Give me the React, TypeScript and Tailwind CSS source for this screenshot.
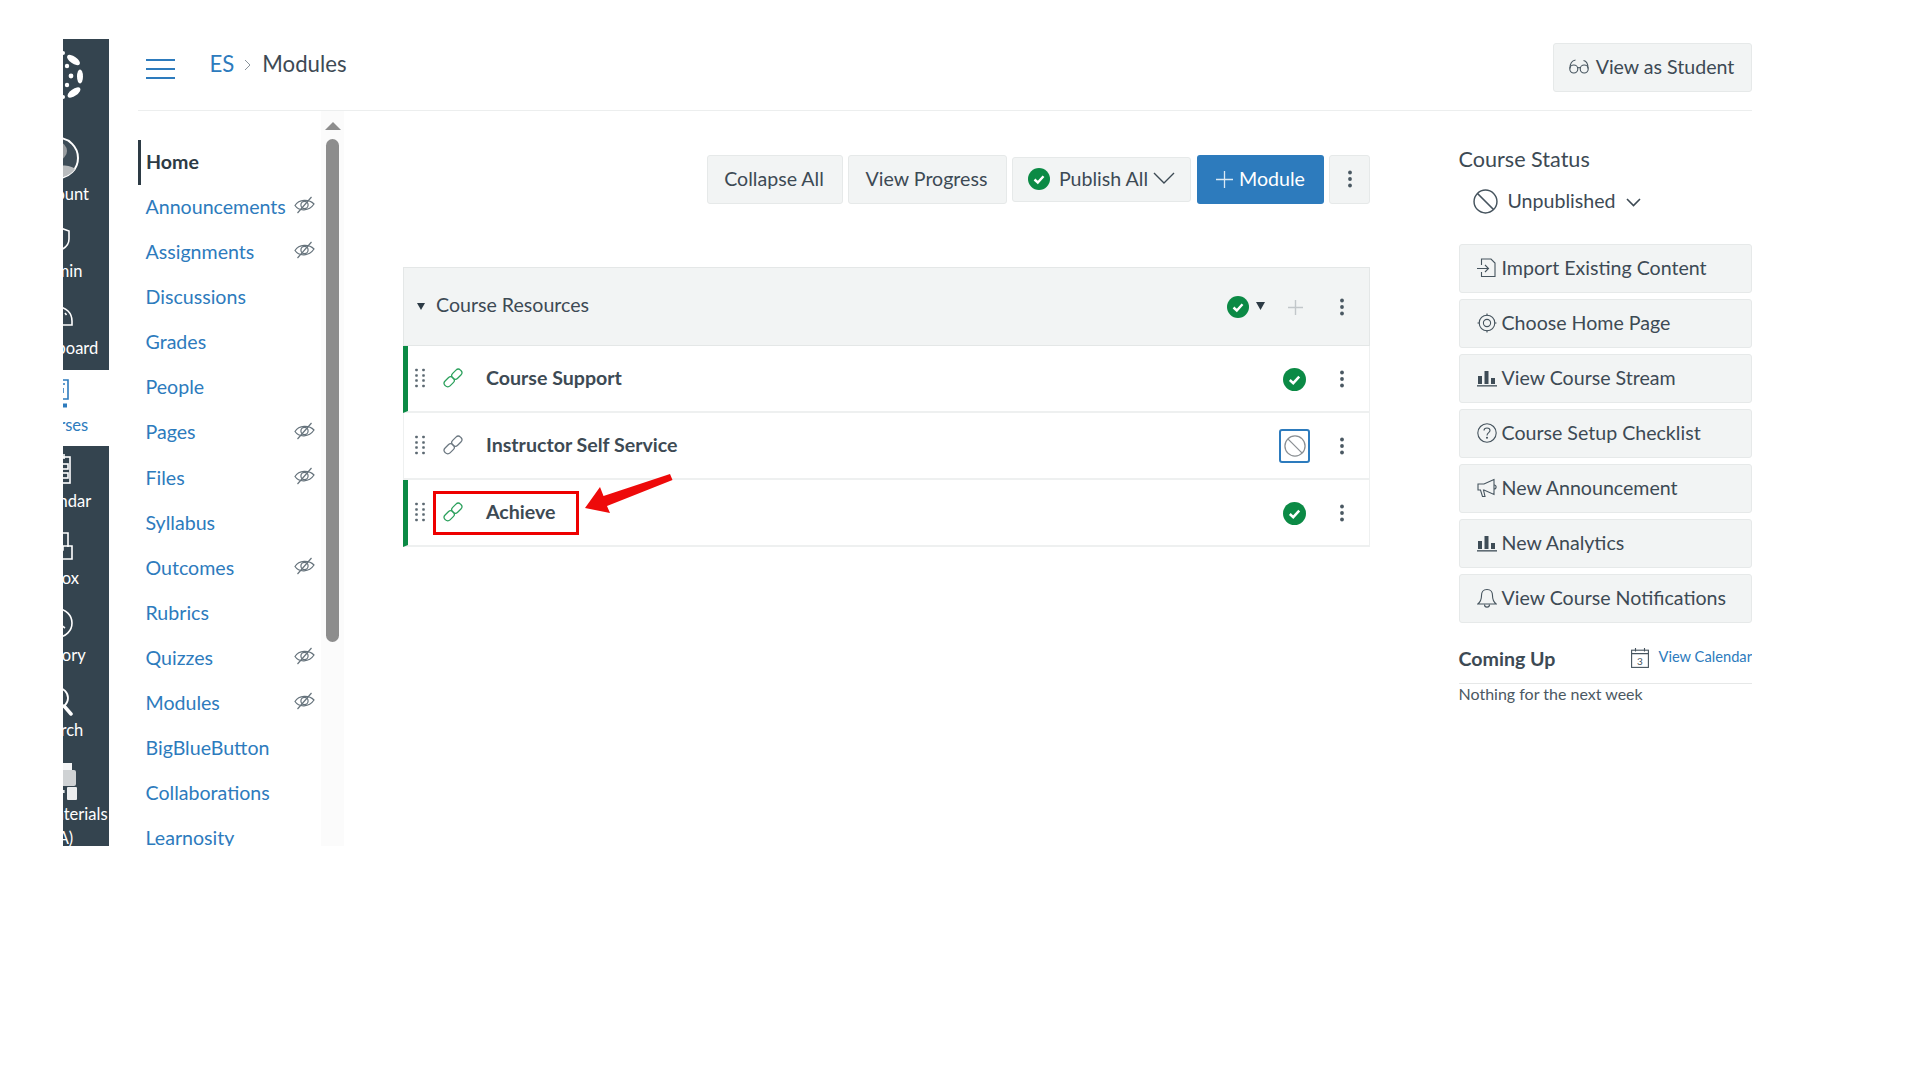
import React from "react";

const Eye = () => (
  <svg width="21" height="18" viewBox="0 0 21 18" fill="none" stroke="#66737c" strokeWidth="1.2" className="mt-[-3px] shrink-0">
    <path d="M1 9.5C5 3 15 3 20 8C15 15.5 5 15.5 1 9.5Z" />
    <circle cx="10.5" cy="9" r="3.6" />
    <path d="M3.5 17L17.5 1" />
  </svg>
);

const Dots = () => (
  <svg width="10" height="20" viewBox="0 0 10 20" fill="#5c6972" className="mt-[2px]">
    {[1.5, 8.5].map((x) => [2, 7.5, 12.5, 18].map((y) => <rect key={`${x}-${y}`} x={x - 1.3} y={y - 1.3} width="2.6" height="2.6" rx="0.8" />))}
  </svg>
);

const Chain = ({ c }: { c: string }) => (
  <svg width="20" height="20" viewBox="0 0 20 20" fill="none" stroke={c} strokeWidth="1.25" className="mt-[2px]">
    <rect x="0.7" y="10.3" width="11" height="7" rx="3.2" transform="rotate(-45 6.2 13.8)" />
    <rect x="8.3" y="2.7" width="11" height="7" rx="3.2" transform="rotate(-45 13.8 6.2)" />
  </svg>
);

const Check = ({ s = 22 }: { s?: number }) => (
  <svg width={s} height={s} viewBox="0 0 22 22" className="shrink-0">
    <circle cx="11" cy="11" r="11" fill="#0b8a45" />
    <path d="M6.5 11.5L9.8 14.5L15.5 8.3" fill="none" stroke="#fff" strokeWidth="2.4" />
  </svg>
);

const Kebab = () => (
  <svg width="6" height="18" viewBox="0 0 6 18" fill="#4a5862" className="shrink-0">
    <circle cx="3" cy="2.5" r="1.9" />
    <circle cx="3" cy="9" r="1.9" />
    <circle cx="3" cy="15.5" r="1.9" />
  </svg>
);

const Ban = ({ s, c }: { s: number; c: string }) => (
  <svg width={s} height={s} viewBox="0 0 24 24" fill="none" stroke={c} strokeWidth="1.4">
    <circle cx="12" cy="12" r="11" />
    <path d="M4.2 4.2L19.8 19.8" />
  </svg>
);

const Bars = () => (
  <svg width="20" height="18" viewBox="0 0 20 18" fill="#3e4c56">
    <rect x="1" y="7" width="4" height="8" />
    <rect x="7.5" y="2" width="4" height="13" />
    <rect x="14" y="9" width="4" height="6" />
    <rect x="0" y="16.2" width="20" height="1.3" />
  </svg>
);

const I = { fill: "none", stroke: "#46545e", strokeWidth: 1.1 };

const Import = () => (
  <svg width="20" height="20" viewBox="0 0 20 20" {...I}>
    <path d="M4.5 7V1H14L18 5V18.5H4.5V14" />
    <path d="M0 10.5H11M8 7L11.5 10.5L8 14" />
  </svg>
);
const Target = () => (
  <svg width="20" height="20" viewBox="0 0 20 20" {...I}>
    <circle cx="10" cy="10" r="7.8" />
    <circle cx="10" cy="10" r="3.6" />
    <path d="M10 0.5V3M10 17V19.5M0.5 10H3M17 10H19.5" />
  </svg>
);
const Help = () => (
  <svg width="20" height="20" viewBox="0 0 20 20" {...I}>
    <circle cx="10" cy="10" r="9.2" />
    <path d="M7 7.6C7 5.8 8.4 5 10 5C11.7 5 13 6 13 7.6C13 9.7 10 9.6 10 12.4" />
    <circle cx="10" cy="14.8" r="0.5" />
  </svg>
);
const Mega = () => (
  <svg width="20" height="20" viewBox="0 0 20 20" {...I}>
    <path d="M17 1.5L7 6H1V12H3.5L5.5 18.5H8L6.5 12H7L17 16.5Z" />
    <path d="M17 7C19.8 7 19.8 11 17 11" />
  </svg>
);
const Bell = () => (
  <svg width="20" height="20" viewBox="0 0 20 20" {...I}>
    <path d="M10 1.5C6 1.5 4.5 4.5 4.5 7.5C4.5 11.5 3.5 14 0.8 16H19.2C16.5 14 15.5 11.5 15.5 7.5C15.5 4.5 14 1.5 10 1.5Z" />
    <path d="M7.5 16.5C7.5 20 12.5 20 12.5 16.5" />
  </svg>
);
const Glasses = () => (
  <svg width="20" height="16" viewBox="0 0 20 16" {...I}>
    <circle cx="4.8" cy="10" r="4" />
    <circle cx="15.2" cy="10" r="4" />
    <path d="M8.6 9C9.4 8.4 10.6 8.4 11.4 9M0.9 9.5C1 5 3 1.5 6.5 1M19.1 9.5C19 5 17.5 2 14.5 1.5" />
  </svg>
);

const Cal = () => (
  <svg width="18" height="20" viewBox="0 0 18 20" fill="none" stroke="#46545e" strokeWidth="1.1">
    <rect x="0.6" y="2.2" width="16.8" height="17.2" />
    <path d="M0.6 5.6H17.4M4.5 0V3.5M13.5 0V3.5" />
    <text x="9" y="16.5" textAnchor="middle" fontSize="10" fill="#46545e" stroke="none" fontFamily="Lato">3</text>
  </svg>
);

const navIcons: Record<string, React.ReactNode> = {
  Account: (
    <svg width="42" height="42" viewBox="0 0 42 42">
      <circle cx="21" cy="21" r="20" fill="#3d4c57" stroke="#fff" strokeWidth="2" />
      <circle cx="21" cy="14" r="9" fill="#999da0" />
      <path d="M8 39C8 27 32 26 38 32C32 41 18 43 8 39Z" fill="#b9bcbe" />
    </svg>
  ),
  Admin: (
    <svg width="24" height="26" viewBox="0 0 24 26" fill="none" stroke="#fff" strokeWidth="1.6">
      <path d="M12 1L23 5V13C23 19 18 23 12 25C6 23 1 19 1 13V5Z" />
      <circle cx="12" cy="15" r="3" fill="#fff" />
    </svg>
  ),
  Dashboard: (
    <svg width="30" height="20" viewBox="0 0 30 20" fill="none" stroke="#fff" strokeWidth="1.6">
      <path d="M1 19V15C1 7 7 1 15 1C23 1 29 7 29 15V19Z" />
      <path d="M22 7L23.5 9" />
    </svg>
  ),
  Courses: (
    <svg width="22" height="29" viewBox="0 0 22 29" fill="none" stroke="#2d7bbd" strokeWidth="1.6">
      <path d="M1 1H21V20H1Z" />
      <path d="M15 5H18M16 9V14" />
      <path d="M1 26.5H20" strokeWidth="4" />
    </svg>
  ),
  Calendar: (
    <svg width="26" height="30" viewBox="0 0 26 30" fill="none" stroke="#fff" strokeWidth="1.6">
      <rect x="1" y="3" width="24" height="26" />
      <path d="M7 0V5M19 0V5" />
      <rect x="17" y="10" width="6" height="5" />
      <rect x="17" y="19" width="6" height="5" />
      <rect x="5" y="10" width="6" height="5" />
    </svg>
  ),
  Inbox: (
    <svg width="30" height="28" viewBox="0 0 30 28" fill="none" stroke="#fff" strokeWidth="1.6">
      <path d="M25 15V1H8V15" />
      <path d="M1 14H10V18H20V14H29V27H1Z" />
    </svg>
  ),
  History: (
    <svg width="30" height="30" viewBox="0 0 30 30" fill="none" stroke="#fff" strokeWidth="1.6">
      <circle cx="15" cy="15" r="14" />
      <path d="M15 7V15L22 20" />
    </svg>
  ),
  Search: (
    <svg width="30" height="34" viewBox="0 0 30 34" fill="none" stroke="#fff" strokeWidth="1.8">
      <circle cx="15" cy="16" r="10" />
      <path d="M21 24L28 32" strokeWidth="3.5" strokeLinecap="round" />
    </svg>
  ),
  "Lab Materials": (
    <svg width="38" height="38" viewBox="0 0 38 38" className="mt-[3px]">
      <rect x="10" y="1" width="23" height="17" fill="#f4f5f6" />
      <rect x="12" y="8" width="25" height="16" rx="2" fill="#cfd2d4" />
      <rect x="28" y="25" width="10" height="13" rx="1" fill="#eceeef" />
      <rect x="24" y="28" width="1.6" height="3" fill="#eceeef" />
    </svg>
  ),
};

const navItems = [
  { t: "Account", h: "h-[86px]", b: "h-[55px]" },
  { t: "Admin", h: "h-[77px]", b: "h-[46px]" },
  { t: "Dashboard", h: "h-[77px]", b: "h-[46px]" },
  { t: "Courses", h: "h-[76px]", b: "h-[46px]", active: true },
  { t: "Calendar", h: "h-[77px]", b: "h-[46px]" },
  { t: "Inbox", h: "h-[77px]", b: "h-[46px]" },
  { t: "History", h: "h-[77px]", b: "h-[46px]" },
  { t: "Search", h: "h-[77px]", b: "h-[44px]" },
  { t: "Lab Materials", h: "h-[92px]", b: "h-[51px]" },
];

const side: [string, boolean][] = [
  ["Announcements", true],
  ["Assignments", true],
  ["Discussions", false],
  ["Grades", false],
  ["People", false],
  ["Pages", true],
  ["Files", true],
  ["Syllabus", false],
  ["Outcomes", true],
  ["Rubrics", false],
  ["Quizzes", true],
  ["Modules", true],
  ["BigBlueButton", false],
  ["Collaborations", false],
  ["Learnosity", false],
];

const actions: [string, React.ReactNode][] = [
  ["Import Existing Content", <Import />],
  ["Choose Home Page", <Target />],
  ["View Course Stream", <Bars />],
  ["Course Setup Checklist", <Help />],
  ["New Announcement", <Mega />],
  ["New Analytics", <Bars />],
  ["View Course Notifications", <Bell />],
];

const btn = "flex items-center justify-center rounded-[3px] border border-[#e6e9e9] bg-[#f2f4f4] pb-[2px] text-[19.6px] text-[#3d4a54]";

const items = [
  { t: "Course Support", pub: true },
  { t: "Instructor Self Service", pub: false },
  { t: "Achieve", pub: true },
];

export default function App() {
  return (
    <div className="flex h-[1080px] w-[1920px] items-start overflow-hidden bg-white font-[Lato,sans-serif] text-[19.6px] text-[#2d3b45]">
      <nav className="ml-[63px] mt-[39px] h-[807px] w-[46px] shrink-0 overflow-hidden bg-[#34444f]">
        <div className="ml-[-57px] w-[104px]">
          <div className="flex h-[91px] justify-center pt-[11px]">
            <svg width="52" height="50" viewBox="0 0 52 50" fill="#fff">
              <ellipse cx="41.5" cy="10" rx="7.5" ry="3.5" transform="rotate(35 41.5 10)" />
              <ellipse cx="48" cy="26.5" rx="3" ry="7" />
              <ellipse cx="42" cy="42.5" rx="7.5" ry="3.5" transform="rotate(-35 42 42.5)" />
              <circle cx="35" cy="16" r="2.2" />
              <circle cx="39" cy="26" r="2.4" />
              <circle cx="35" cy="35" r="2.2" />
              <circle cx="31" cy="3" r="2" />
              <circle cx="31" cy="47" r="2" />
            </svg>
          </div>
          {navItems.map((n) => (
            <div key={n.t} className={`${n.h} flex flex-col items-center ${n.active ? "bg-white text-[#2d7bbd]" : "text-white"}`}>
              <div className={`${n.b} flex w-full shrink-0 items-center justify-center`}>{navIcons[n.t]}</div>
              <div className="whitespace-nowrap pl-[2px] text-center text-[16.5px] leading-[18px]">
                {n.t}
                {n.t === "Lab Materials" && <div className="mt-[6px]">(LA)</div>}
              </div>
            </div>
          ))}
        </div>
      </nav>

      <div className="ml-[29px] mt-[39px] w-[1614px] shrink-0">
        <header className="flex h-[72px] items-start justify-between border-b border-[#eceeee] pt-[4px]">
          <div className="flex h-[49px] items-center pl-[8px]">
            <svg width="29" height="20" viewBox="0 0 29 20" fill="#2d7bbd" className="mt-[2px]">
              <rect y="0" width="29" height="2" />
              <rect y="9" width="29" height="2" />
              <rect y="18" width="29" height="2" />
            </svg>
            <div className="ml-[34.5px] mt-[-7px] flex items-center text-[22.2px]">
              <span className="text-[#2d7bbd]">ES</span>
              <svg width="7" height="12" viewBox="0 0 7 12" fill="none" stroke="#8a949b" strokeWidth="1" className="ml-[10px] mr-[11px] mt-[3px]">
                <path d="M1 1L6 6L1 11" />
              </svg>
              <span className="text-[#3d4a54]">Modules</span>
            </div>
          </div>
          <div className={`${btn} h-[49px] w-[199px] gap-[7px] pr-[2px]`}>
            <Glasses />
            <span>View as Student</span>
          </div>
        </header>

        <div className="flex h-[735px] overflow-hidden">
          <aside className="flex w-[206px] shrink-0">
            <ul className="w-[183px] pt-[29px] text-[#2d7bbd]">
              <li className="flex h-[45.1px] w-[177px] items-center border-l-[3px] border-[#2d3b45] pb-[2px] pl-[5px] font-bold text-[#2d3b45]">Home</li>
              {side.map(([t, e]) => (
                <li key={t} className="flex h-[45.1px] w-[177px] items-center justify-between pb-[2px] pl-[7.5px]">
                  <span>{t}</span>
                  {e && <Eye />}
                </li>
              ))}
            </ul>
            <div className="w-[23px] bg-[#fbfbfb] pl-[4px] pt-[11px]">
              <svg width="16" height="8" viewBox="0 0 16 8" fill="#8d8d8d">
                <path d="M8 0L16 8H0Z" />
              </svg>
              <div className="ml-[1px] mt-[9px] h-[503px] w-[13px] rounded-full bg-[#8d8d8d]" />
            </div>
          </aside>

          <main className="ml-[59px] w-[967px] shrink-0 pt-[44px]">
            <div className="flex items-center justify-end gap-[5px]">
              <div className={`${btn} h-[49px] w-[136px] pr-[2px]`}>Collapse All</div>
              <div className={`${btn} h-[49px] w-[159px] pr-[2px]`}>View Progress</div>
              <div className={`${btn} h-[45px] w-[179px] gap-[9px]`}>
                <Check />
                <span className="flex items-center gap-[5px]">
                  Publish All
                  <svg width="22" height="12" viewBox="0 0 22 12" fill="none" stroke="#3d4a54" strokeWidth="1.4">
                    <path d="M1 1L11 11L21 1" />
                  </svg>
                </span>
              </div>
              <div className="ml-[1px] flex h-[49px] w-[127px] items-center justify-center gap-[6px] rounded-[3px] bg-[#2d7bbd] pb-[2px] text-white">
                <svg width="17" height="17" viewBox="0 0 17 17" stroke="#dbe9f4" strokeWidth="1.3" className="mt-[2px]">
                  <path d="M8.5 0V17M0 8.5H17" />
                </svg>
                Module
              </div>
              <div className={`${btn} h-[49px] w-[41px]`}>
                <Kebab />
              </div>
            </div>

            <section className="relative mt-[63px]">
              <div className="flex h-[79px] items-center border border-[#e4e7e7] bg-[#f2f4f4] pl-[13px]">
                <svg width="8" height="7" viewBox="0 0 8 7" fill="#2d3b45">
                  <path d="M0 0H8L4 7Z" />
                </svg>
                <span className="mb-[3px] ml-[11px] text-[#3d4a54]">Course Resources</span>
                <div className="ml-auto flex items-center">
                  <Check />
                  <svg width="9" height="8" viewBox="0 0 9 8" fill="#2d3b45" className="ml-[7px] mt-[-2px]">
                    <path d="M0 0H9L4.5 8Z" />
                  </svg>
                  <svg width="15" height="15" viewBox="0 0 15 15" stroke="#c2c7ca" strokeWidth="1.4" className="ml-[23px] mt-[1px]">
                    <path d="M7.5 0V15M0 7.5H15" />
                  </svg>
                  <div className="ml-[36px] mr-[24px] flex">
                    <Kebab />
                  </div>
                </div>
              </div>
              {items.map((it) => (
                <div
                  key={it.t}
                  className={`flex h-[67px] items-center border-b-2 border-r border-b-[#eef0f0] border-r-[#eef0f0] ${it.pub ? "border-l-[5px] border-l-[#0b8a45] pl-[7px]" : "border-l border-l-[#eef0f0] pl-[11px]"}`}
                >
                  <div className="mb-[2px] flex items-center">
                    <Dots />
                    <div className="ml-[18px]">
                      <Chain c={it.pub ? "#2ba05c" : "#6b7780"} />
                    </div>
                    <span className="ml-[23px] font-bold text-[#3d4a54]">{it.t}</span>
                  </div>
                  <div className="ml-auto flex w-[31px] justify-center">
                    {it.pub ? (
                      <div className="mt-[2px]">
                        <Check s={23} />
                      </div>
                    ) : (
                      <div className="flex h-[34px] w-[31px] items-center justify-center rounded-[3px] border-[2px] border-[#2d7bbd]">
                        <Ban s={22} c="#8a8f93" />
                      </div>
                    )}
                  </div>
                  <div className="ml-[29px] mr-[24px] flex">
                    <Kebab />
                  </div>
                </div>
              ))}
              <div className="absolute left-[30px] top-[224px] h-[44px] w-[146px] border-[3px] border-[#ee0000]" />
              <svg width="95" height="45" viewBox="0 0 95 45" className="absolute left-[180px] top-[205px]">
                <path d="M87 2L89.5 8L24 34L27 41L2 36L17 15L20.5 24Z" fill="#ee0a0a" />
              </svg>
            </section>
          </main>

          <div className="ml-[88.5px] w-[293.5px] shrink-0 pt-[35px]">
            <h2 className="text-[21.6px] leading-[26px] text-[#3d4a54]">Course Status</h2>
            <div className="ml-[14px] mt-[17px] flex h-[24px] items-center text-[#3d4a54]">
              <Ban s={25} c="#46545e" />
              <span className="ml-[10px]">Unpublished</span>
              <svg width="15" height="9" viewBox="0 0 15 9" fill="none" stroke="#3d4a54" strokeWidth="1.6" className="ml-[10px] mt-[2px]">
                <path d="M1 1L7.5 7.5L14 1" />
              </svg>
            </div>
            <div className="mt-[31px] flex flex-col gap-[6px]">
              {actions.map(([t, ic]) => (
                <div key={t} className={`${btn} h-[49px] !justify-start gap-[5px] pl-[17px]`}>
                  <span className="flex w-[20px] justify-center">{ic}</span>
                  <span>{t}</span>
                </div>
              ))}
            </div>
            <div className="mt-[20px] flex h-[41px] items-start justify-between border-b border-[#e6e8e8]">
              <span className="mt-[1px] font-bold text-[#3d4a54]">Coming Up</span>
              <div className="mt-[5px] flex items-start gap-[9px]">
                <Cal />
                <span className="mt-[-1px] text-[14.7px] leading-[18px] text-[#2d7bbd]">View Calendar</span>
              </div>
            </div>
            <p className="mt-[-1px] text-[16px] leading-[22px] text-[#4b5862]">Nothing for the next week</p>
          </div>
        </div>
      </div>
    </div>
  );
}
